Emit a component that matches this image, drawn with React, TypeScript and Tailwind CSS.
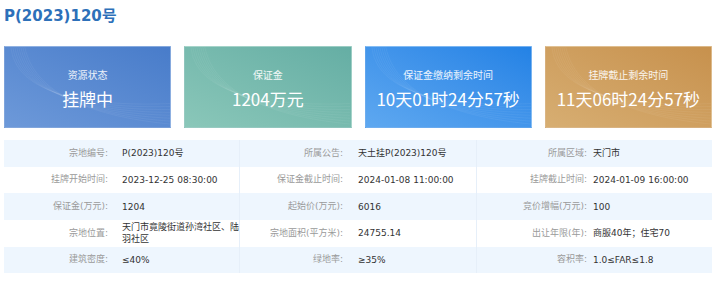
import React from 'react';

const CARDS = [
  { label: '资源状态', value: '挂牌中', bg: 'bg-linear-to-tr from-[#6d99d9] to-[#487cca]' },
  { label: '保证金', value: '1204万元', bg: 'bg-linear-to-tr from-[#8ac7b9] to-[#65aea4]' },
  { label: '保证金缴纳剩余时间', value: '10天01时24分57秒', bg: 'bg-linear-to-tr from-[#5ea8f0] to-[#2382e5]' },
  { label: '挂牌截止剩余时间', value: '11天06时24分57秒', bg: 'bg-linear-to-tr from-[#d7ae72] to-[#c7914d]' },
];

const ROWS: [string, string][][] = [
  [['宗地编号:', 'P(2023)120号'], ['所属公告:', '天土挂P(2023)120号'], ['所属区域:', '天门市']],
  [['挂牌开始时间:', '2023-12-25 08:30:00'], ['保证金截止时间:', '2024-01-08 11:00:00'], ['挂牌截止时间:', '2024-01-09 16:00:00']],
  [['保证金(万元):', '1204'], ['起始价(万元):', '6016'], ['竞价增幅(万元):', '100']],
  [['宗地位置:', '天门市竟陵街道孙湾社区、陆羽社区'], ['宗地面积(平方米):', '24755.14'], ['出让年限(年):', '商服40年；住宅70']],
  [['建筑密度:', '≤40%'], ['绿地率:', '≥35%'], ['容积率:', '1.0≤FAR≤1.8']],
];

// per pair: label cell extra class, value cell padding
const PAIR = [
  { label: '', value: 'pl-[14px]' },
  { label: 'border-l border-[#e6eff9]', value: 'pl-[15px]' },
  { label: 'border-l border-[#e6eff9]', value: 'pl-[6px]' },
];

function Waves() {
  return (
    <svg className="absolute inset-0 w-full h-full pointer-events-none" viewBox="0 0 167 82" preserveAspectRatio="none">
      {[0, 1, 2, 3, 4, 5, 6, 7].map((i) => (
        <path
          key={i}
          d={`M${6 + i * 2} 0 C ${10 + i * 3} ${40 + i * 2}, ${60 + i * 6} ${62 + i * 1.5}, 167 ${58 + i * 3}`}
          fill="none"
          stroke="white"
          strokeOpacity={0.07}
          strokeWidth={0.8}
        />
      ))}
    </svg>
  );
}

export default function App() {
  return (
    <div className="w-[720px] h-[291px] bg-white pl-[4px] pr-[8px] overflow-hidden" style={{ fontFamily: '"DejaVu Sans", "Noto Sans CJK SC", sans-serif' }}>
      <h1 className="pt-[7px] h-[26px] leading-[19px] text-[15px] font-bold text-[#2d70b9]">P(2023)120号</h1>

      <div className="mt-[20px] grid grid-cols-4 gap-[13px]">
        {CARDS.map((c) => (
          <div
            key={c.label}
            className={`relative h-[82px] border border-white/25 ${c.bg} flex flex-col items-center text-white`}
            style={{ fontFamily: '"Noto Sans CJK SC", sans-serif' }}
          >
            <Waves />
            <div className="mt-[21px] text-[10px] leading-[14px] text-white/90">{c.label}</div>
            <div className="mt-[6px] text-[17px] leading-[22px]">{c.value}</div>
          </div>
        ))}
      </div>

      <div className="mt-[12px] grid grid-cols-[104px_131px_104px_133px_111px_125px] text-[9px]">
        {ROWS.map((row, ri) => (
          <React.Fragment key={ri}>
            {row.map(([label, value], pi) => (
              <React.Fragment key={pi}>
                <div className={`h-[26.67px] flex items-center justify-end text-[#9a9a9a] ${PAIR[pi].label} ${ri % 2 === 0 ? 'bg-[#eef6fe]' : 'bg-white'}`}>
                  {label}
                </div>
                <div className={`h-[26.67px] flex items-center leading-[12px] text-[#333] ${PAIR[pi].value} ${ri % 2 === 0 ? 'bg-[#eef6fe]' : 'bg-white'}`}>
                  {value}
                </div>
              </React.Fragment>
            ))}
          </React.Fragment>
        ))}
      </div>
    </div>
  );
}
